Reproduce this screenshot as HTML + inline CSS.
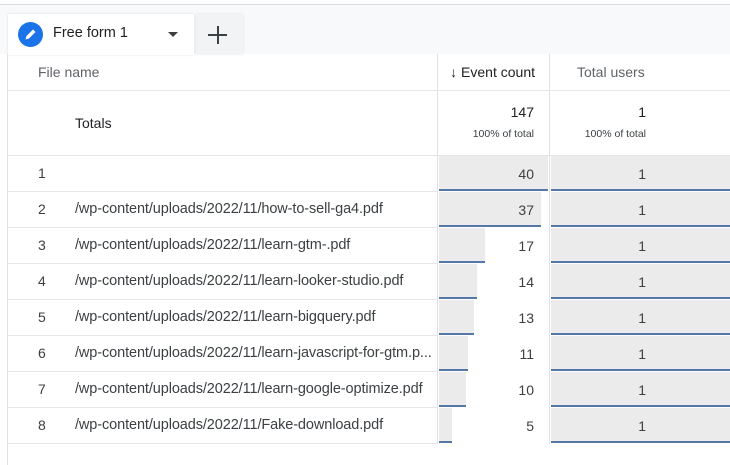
<!DOCTYPE html>
<html><head><style>
body{margin:0;width:730px;height:465px;overflow:hidden;background:#fff;font-family:"Liberation Sans",Arial,sans-serif;color:#3c4043;position:relative}
div{position:absolute;box-sizing:border-box}
.t{font-size:13px;white-space:nowrap}
.p{font-size:14.5px;white-space:nowrap;letter-spacing:-0.1px}
.n{font-size:14px;white-space:nowrap}
.r{text-align:right}
.hl{left:8px;right:0;height:1px;background:#e6e6e6}
.bar{background:#ebebeb;border-bottom:2px solid #5677a8}
</style></head><body>
<div style="left:0;width:730px;background:#f8f9fa;border-top:1px solid #dadce0;top:4px;height:50px"></div>
<div style="left:8px;top:14px;width:186px;height:41px;background:#fff;box-shadow:0 0 2px rgba(0,0,0,.12)"></div>
<div style="left:196px;top:14px;width:47px;height:40px;background:#f1f3f4;box-shadow:0 0 2px rgba(0,0,0,.12)"></div>
<div style="left:18px;top:22px;width:25px;height:25px;border-radius:50%;background:#1a73e8">
<svg width="25" height="25" viewBox="0 0 25 25"><path d="M7.5 17.5l1-3.5 6.5-6.5 2.5 2.5-6.5 6.5z" fill="#fff"/></svg></div>
<div class="t" style="left:53px;top:25px;font-size:14.5px;color:#202124">Free form 1</div>
<div style="left:168px;top:32px;width:0;height:0;border-left:5px solid transparent;border-right:5px solid transparent;border-top:5px solid #3c4043"></div>
<div style="left:208px;top:34px;width:19px;height:2px;background:#3c4043"></div>
<div style="left:216.5px;top:26px;width:2px;height:18px;background:#3c4043"></div>
<div style="left:7px;top:54px;width:1px;height:411px;background:#e0e0e0"></div>
<div style="left:437px;top:54px;width:1px;height:390px;background:#e0e0e0"></div>
<div style="left:549px;top:54px;width:1px;height:390px;background:#e0e0e0"></div>
<div class="n" style="left:38px;top:64px;color:#5f6368">File name</div>
<div class="n r" style="left:440px;width:95px;top:64px;color:#202124">↓ Event count</div>
<div class="n" style="left:577px;top:64px;color:#5f6368">Total users</div>
<div class="hl" style="top:90px"></div>
<div class="n" style="left:75px;top:115px;color:#202124">Totals</div>
<div class="n r" style="left:440px;width:94px;top:104px;color:#202124">147</div>
<div class="r" style="left:440px;width:94px;top:128px;font-size:10.5px">100% of total</div>
<div class="n r" style="left:550px;width:96px;top:104px;color:#202124">1</div>
<div class="r" style="left:550px;width:96px;top:128px;font-size:10.5px">100% of total</div>
<div class="hl" style="top:155px"></div>

<div class="bar" style="left:439px;top:156px;width:109px;height:35px"></div><div class="bar" style="left:551px;top:156px;width:179px;height:35px"></div>
<div class="bar" style="left:439px;top:192px;width:102px;height:35px"></div><div class="bar" style="left:551px;top:192px;width:179px;height:35px"></div>
<div class="bar" style="left:439px;top:228px;width:46px;height:35px"></div><div class="bar" style="left:551px;top:228px;width:179px;height:35px"></div>
<div class="bar" style="left:439px;top:264px;width:38px;height:35px"></div><div class="bar" style="left:551px;top:264px;width:179px;height:35px"></div>
<div class="bar" style="left:439px;top:300px;width:35px;height:35px"></div><div class="bar" style="left:551px;top:300px;width:179px;height:35px"></div>
<div class="bar" style="left:439px;top:336px;width:29px;height:35px"></div><div class="bar" style="left:551px;top:336px;width:179px;height:35px"></div>
<div class="bar" style="left:439px;top:372px;width:27px;height:35px"></div><div class="bar" style="left:551px;top:372px;width:179px;height:35px"></div>
<div class="bar" style="left:439px;top:408px;width:13px;height:35px"></div><div class="bar" style="left:551px;top:408px;width:179px;height:35px"></div>

<div class="hl" style="top:191px;right:293px"></div>
<div class="hl" style="top:227px;right:293px"></div>
<div class="hl" style="top:263px;right:293px"></div>
<div class="hl" style="top:299px;right:293px"></div>
<div class="hl" style="top:335px;right:293px"></div>
<div class="hl" style="top:371px;right:293px"></div>
<div class="hl" style="top:407px;right:293px"></div>
<div class="hl" style="top:443px;right:293px"></div>

<div class="n" style="left:38px;top:165px">1</div>
<div class="n" style="left:38px;top:201px">2</div><div class="p" style="left:75px;top:201px">/wp-content/uploads/2022/11/how-to-sell-ga4.pdf</div>
<div class="n" style="left:38px;top:237px">3</div><div class="p" style="left:75px;top:237px">/wp-content/uploads/2022/11/learn-gtm-.pdf</div>
<div class="n" style="left:38px;top:273px">4</div><div class="p" style="left:75px;top:273px">/wp-content/uploads/2022/11/learn-looker-studio.pdf</div>
<div class="n" style="left:38px;top:309px">5</div><div class="p" style="left:75px;top:309px">/wp-content/uploads/2022/11/learn-bigquery.pdf</div>
<div class="n" style="left:38px;top:345px">6</div><div class="p" style="left:75px;top:345px;width:361px;overflow:hidden">/wp-content/uploads/2022/11/learn-javascript-for-gtm.p...</div>
<div class="n" style="left:38px;top:381px">7</div><div class="p" style="left:75px;top:381px">/wp-content/uploads/2022/11/learn-google-optimize.pdf</div>
<div class="n" style="left:38px;top:417px">8</div><div class="p" style="left:75px;top:417px">/wp-content/uploads/2022/11/Fake-download.pdf</div>

<div class="n r" style="left:440px;width:94px;top:166px">40</div><div class="n r" style="left:550px;width:96px;top:166px">1</div>
<div class="n r" style="left:440px;width:94px;top:202px">37</div><div class="n r" style="left:550px;width:96px;top:202px">1</div>
<div class="n r" style="left:440px;width:94px;top:238px">17</div><div class="n r" style="left:550px;width:96px;top:238px">1</div>
<div class="n r" style="left:440px;width:94px;top:274px">14</div><div class="n r" style="left:550px;width:96px;top:274px">1</div>
<div class="n r" style="left:440px;width:94px;top:310px">13</div><div class="n r" style="left:550px;width:96px;top:310px">1</div>
<div class="n r" style="left:440px;width:94px;top:346px">11</div><div class="n r" style="left:550px;width:96px;top:346px">1</div>
<div class="n r" style="left:440px;width:94px;top:382px">10</div><div class="n r" style="left:550px;width:96px;top:382px">1</div>
<div class="n r" style="left:440px;width:94px;top:418px">5</div><div class="n r" style="left:550px;width:96px;top:418px">1</div>
</body></html>
